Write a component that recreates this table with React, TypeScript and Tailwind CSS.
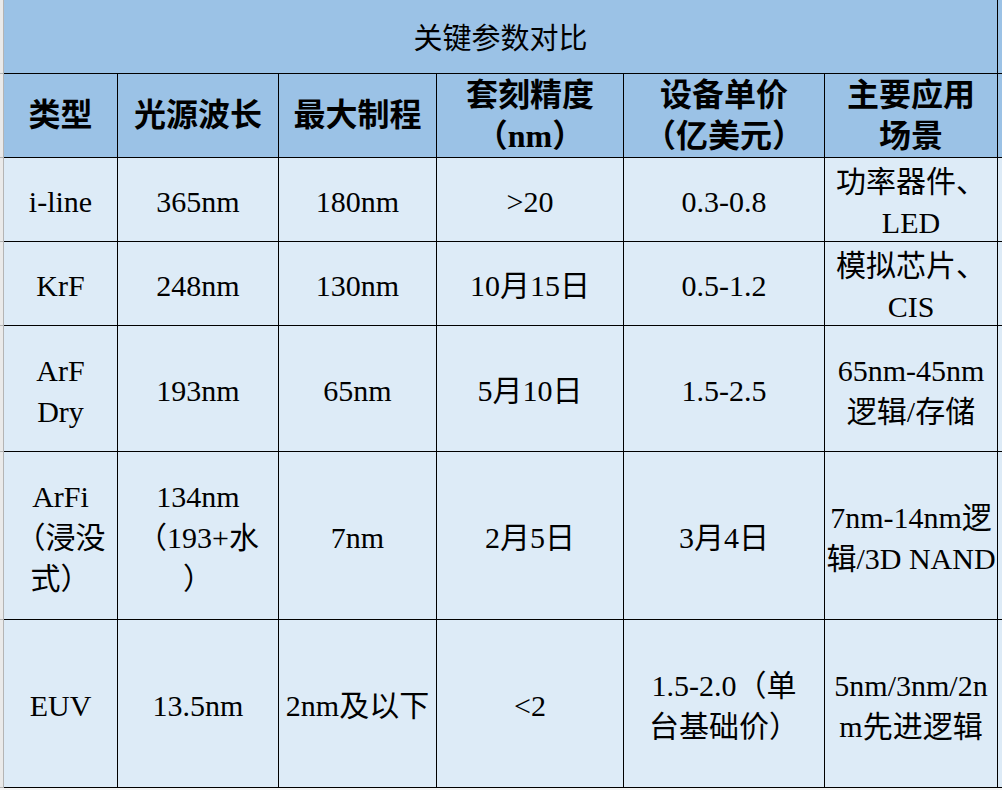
import React from "react";

/* ----------------------------------
   Data
----------------------------------- */

type Row = {
    height: string;
    cells: string[][];
};

const headers: string[][] = [
    ["类型"],
    ["光源波长"],
    ["最大制程"],
    ["套刻精度", "（nm）"],
    ["设备单价", "（亿美元）"],
    ["主要应用", "场景"],
];

const rows: Row[] = [
    {
        height: "h-[84px]",
        cells: [["i-line"], ["365nm"], ["180nm"], [">20"], ["0.3-0.8"], ["功率器件、", "LED"]],
    },
    {
        height: "h-[84px]",
        cells: [["KrF"], ["248nm"], ["130nm"], ["10月15日"], ["0.5-1.2"], ["模拟芯片、", "CIS"]],
    },
    {
        height: "h-[126px]",
        cells: [["ArF", "Dry"], ["193nm"], ["65nm"], ["5月10日"], ["1.5-2.5"], ["65nm-45nm", "逻辑/存储"]],
    },
    {
        height: "h-[168px]",
        cells: [
            ["ArFi", "（浸没", "式）"],
            ["134nm", "（193+水", "）"],
            ["7nm"],
            ["2月5日"],
            ["3月4日"],
            ["7nm-14nm逻", "辑/3D NAND"],
        ],
    },
    {
        height: "h-[168px]",
        cells: [
            ["EUV"],
            ["13.5nm"],
            ["2nm及以下"],
            ["<2"],
            ["1.5-2.0（单", "台基础价）"],
            ["5nm/3nm/2n", "m先进逻辑"],
        ],
    },
];

/* ----------------------------------
   Cell
----------------------------------- */

const Cell = ({ lines, className = "" }: { lines: string[]; className?: string }) => (
    <div
        className={`flex flex-col items-center justify-center border-r border-b border-black text-center leading-[41px] ${className}`}
    >
        {lines.map((l, i) => (
            <span key={i} className="whitespace-pre">
                {l}
            </span>
        ))}
    </div>
);

const Gutter = ({ className = "" }: { className?: string }) => (
    <div className={`border-r border-b border-[#b4b4b4] bg-[#eaeaea] ${className}`} />
);

/* ----------------------------------
   Table
----------------------------------- */

export default function App() {
    return (
        <div
            className="h-[790px] w-[1002px] overflow-hidden bg-[#f4f4f4] text-black"
            style={{ fontFamily: '"Liberation Serif", "Noto Sans CJK SC", serif' }}
        >
            <div className="grid grid-cols-[4px_114px_161px_158px_187px_201px_173px_4px]">
                {/* Title */}
                <Gutter className="h-[74px]" />
                <div className="col-span-6 flex h-[74px] items-center justify-center border-r border-b border-black bg-[#9bc2e6] pt-[6px] text-[29px]">
                    关键参数对比
                </div>
                <div className="h-[74px] border-b border-black bg-[#9bc2e6]" />

                {/* Header */}
                <Gutter className="h-[84px]" />
                {headers.map((h, i) => (
                    <Cell key={i} lines={h} className="h-[84px] bg-[#9bc2e6] text-[32px] font-bold" />
                ))}
                <div className="h-[84px] border-b border-black bg-[#9bc2e6]" />

                {/* Rows */}
                {rows.map((r, ri) => (
                    <React.Fragment key={ri}>
                        <Gutter className={r.height} />
                        {r.cells.map((c, ci) => (
                            <Cell key={ci} lines={c} className={`${r.height} bg-[#ddebf7] pt-[4px] text-[30px]`} />
                        ))}
                        <div className={`${r.height} border-b border-black bg-[#ddebf7]`} />
                    </React.Fragment>
                ))}
            </div>
        </div>
    );
}
